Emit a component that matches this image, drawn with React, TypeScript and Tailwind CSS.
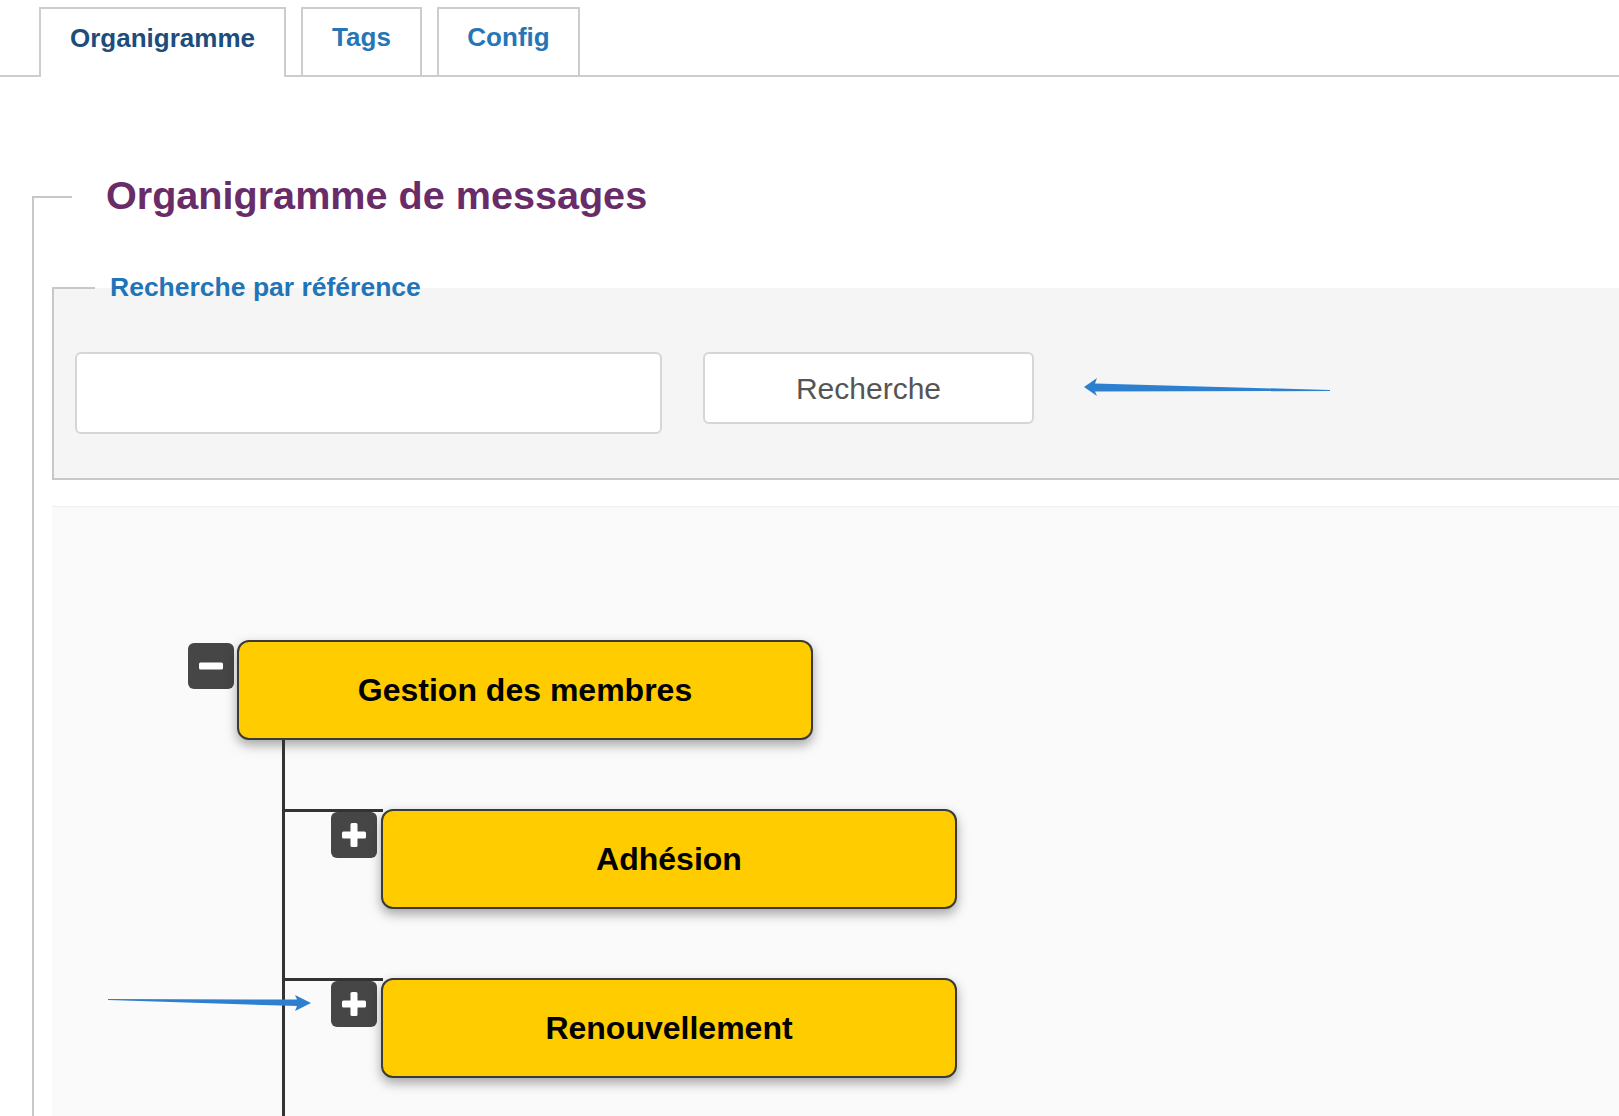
import React from "react";

type NodeProps = { label: string };

function NodeBox({ label }: NodeProps) {
  return (
    <div className="flex h-[100px] w-[576px] items-center justify-center rounded-[12px] border-2 border-[#3a3a3a] bg-[#ffcc00] text-[32px] font-bold text-black shadow-[0_5px_12px_rgba(0,0,0,0.35)]">
      {label}
    </div>
  );
}

function ToggleButton({ open }: { open: boolean }) {
  return (
    <button
      type="button"
      className="flex h-[46px] w-[46px] items-center justify-center rounded-[6px] bg-[#464646]"
      aria-label={open ? "Replier" : "Déplier"}
    >
      <svg width="26" height="26" viewBox="0 0 26 26">
        <rect x="1" y="9.5" width="24" height="7" rx="1.5" fill="#fff" />
        {!open && <rect x="9.5" y="1" width="7" height="24" rx="1.5" fill="#fff" />}
      </svg>
    </button>
  );
}

function ChildRow({ label }: { label: string }) {
  return (
    <div className="flex items-start">
      <div className="w-[98px] border-t-[3px] border-[#333]">
        <div className="ml-[46px]">
          <ToggleButton open={false} />
        </div>
      </div>
      <div className="-ml-[2px]">
        <NodeBox label={label} />
      </div>
    </div>
  );
}

export default function App() {
  const tabs = [
    { label: "Organigramme", width: "w-[247px]", active: true },
    { label: "Tags", width: "w-[121px]", active: false },
    { label: "Config", width: "w-[143px]", active: false },
  ];

  return (
    <div className="relative h-[1116px] overflow-hidden bg-white font-['Liberation_Sans',Arial,sans-serif]">
      {/* onglets */}
      <div className="flex h-[77px] items-end gap-[15px] border-b-2 border-[#cdcdcd] pl-[39px]">
        {tabs.map((tab) => (
          <div
            key={tab.label}
            className={`flex items-center justify-center border-2 border-b-0 border-[#cdcdcd] bg-white pb-[10px] text-[26px] font-bold ${tab.width} ${
              tab.active ? "-mb-[2px] h-[70px] text-[#1c4d7c]" : "h-[68px] text-[#2676b6]"
            }`}
          >
            {tab.label}
          </div>
        ))}
      </div>

      <div className="ml-[32px] mt-[94px]">
        <div className="flex h-[50px] items-center">
          <div className="h-[25px] w-[40px] self-end border-l-2 border-t-2 border-[#c8c8c8]" />
          <h2 className="ml-[34px] text-[39.6px] font-bold leading-none text-[#692c69]">
            Organigramme de messages
          </h2>
        </div>

        <div className="flex h-[900px] flex-col border-l-2 border-[#c8c8c8] pl-[18px]">
          {/* recherche */}
          <div className="mt-[67px] flex flex-col border-b-2 border-l-2 border-[#c8c8c8] bg-[#f5f5f5]">
            <div className="-mt-[20px] flex h-[40px] items-center">
              <div className="-ml-[2px] w-[43px] border-t-2 border-[#c8c8c8]" />
              <span className="ml-[15px] text-[26.5px] font-bold text-[#1f75b7]">
                Recherche par référence
              </span>
            </div>
            <div className="flex items-start gap-[41px] pb-[44px] pl-[21px] pt-[44px]">
              <input
                type="text"
                className="h-[82px] w-[587px] rounded-[6px] border-2 border-[#d6d6d6] bg-white px-3 text-[26px] outline-none"
              />
              <button
                type="button"
                className="h-[72px] w-[331px] rounded-[6px] border-2 border-[#d6d6d6] bg-white text-[30px] text-[#555]"
              >
                Recherche
              </button>
            </div>
          </div>

          {/* organigramme */}
          <div className="mt-[26px] flex h-[700px] flex-col border-t border-[#efefef] bg-[#fafafa] pl-[136px] pt-[133px]">
            <div className="flex items-start gap-[3px]">
              <div className="mt-[3px]">
                <ToggleButton open />
              </div>
              <NodeBox label="Gestion des membres" />
            </div>
            <div className="ml-[94px] flex h-[500px] flex-col gap-[69px] border-l-[3px] border-[#333] pt-[69px]">
              <ChildRow label="Adhésion" />
              <ChildRow label="Renouvellement" />
            </div>
          </div>
        </div>
      </div>

      {/* flèches d'annotation */}
      <svg className="absolute left-[1080px] top-[374px]" width="260" height="30" viewBox="1080 374 260 30">
        <polygon
          points="1084,387 1097,378 1095,383.5 1330,390 1330,391 1095,391.5 1097,396"
          fill="#2d80cf"
        />
      </svg>
      <svg className="absolute left-[100px] top-[990px]" width="220" height="26" viewBox="100 990 220 26">
        <polygon
          points="108,999 297,999.5 295,995 311,1003 295,1011 297,1006 108,1000"
          fill="#2d80cf"
        />
      </svg>
    </div>
  );
}
